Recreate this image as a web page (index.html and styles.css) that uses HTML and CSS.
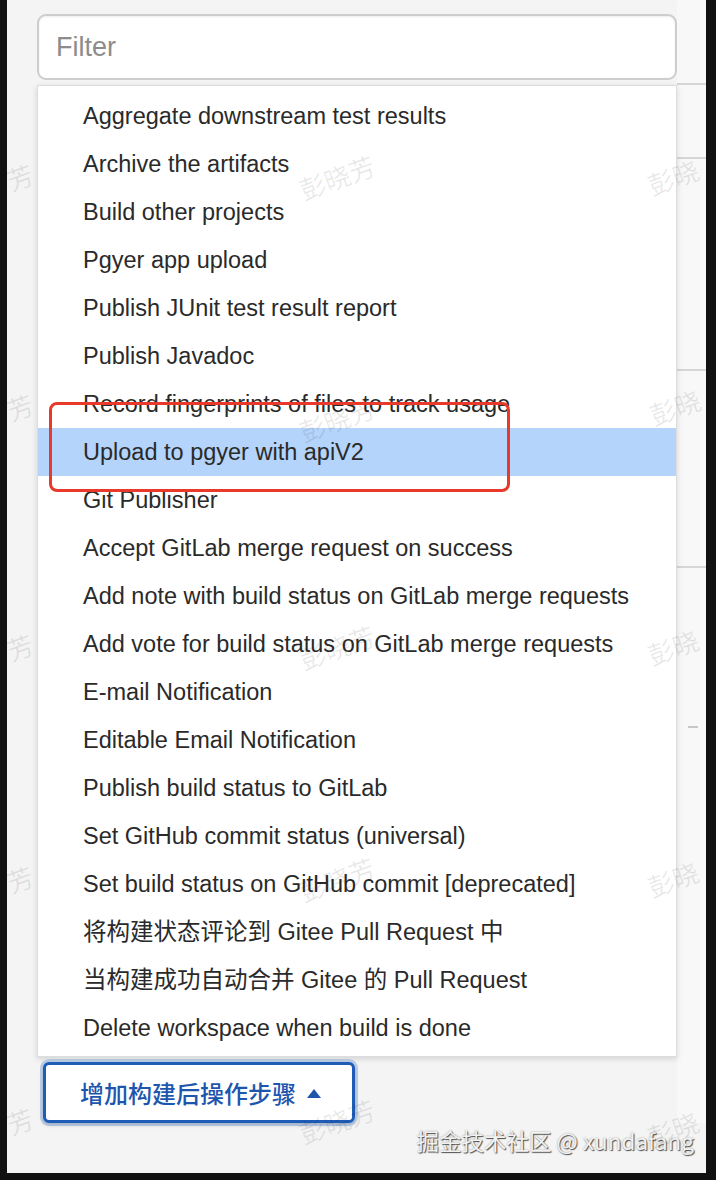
FILE: index.html
```html
<!DOCTYPE html>
<html lang="zh-CN">
<head>
<meta charset="utf-8">
<title>Post-build actions</title>
<link rel="stylesheet" href="styles.css">
</head>
<body>
<div class="page">
  <div class="main">
    <div class="filter"><span class="placeholder">Filter</span></div>
    <ul class="panel">
      <li class="item">Aggregate downstream test results</li>
      <li class="item">Archive the artifacts</li>
      <li class="item">Build other projects</li>
      <li class="item">Pgyer app upload</li>
      <li class="item">Publish JUnit test result report</li>
      <li class="item">Publish Javadoc</li>
      <li class="item">Record fingerprints of files to track usage</li>
      <li class="item active">Upload to pgyer with apiV2</li>
      <li class="item">Git Publisher</li>
      <li class="item">Accept GitLab merge request on success</li>
      <li class="item">Add note with build status on GitLab merge requests</li>
      <li class="item">Add vote for build status on GitLab merge requests</li>
      <li class="item">E-mail Notification</li>
      <li class="item">Editable Email Notification</li>
      <li class="item">Publish build status to GitLab</li>
      <li class="item">Set GitHub commit status (universal)</li>
      <li class="item">Set build status on GitHub commit [deprecated]</li>
      <li class="item">将构建状态评论到 Gitee Pull Request 中</li>
      <li class="item">当构建成功自动合并 Gitee 的 Pull Request</li>
      <li class="item">Delete workspace when build is done</li>
    </ul>
    <button class="add-btn">增加构建后操作步骤<svg class="caret" width="14" height="9" viewBox="0 0 14 9"><path d="M7 0 L14 9 L0 9 Z" fill="currentColor"/></svg></button>
  </div>
  <div class="rail">
    <div class="rail-seg s1"></div>
    <div class="rail-seg s2"></div>
    <div class="rail-seg s3"></div>
    <div class="rail-seg s4"></div>
    <div class="rail-dash"></div>
  </div>
  <div class="footer">掘金技术社区 @ xundafang</div>

  <div class="highlight-box"></div>

  <span class="wm" style="left:0px;top:160px">芳</span>
  <span class="wm" style="left:291px;top:160px">彭晓芳</span>
  <span class="wm" style="left:640px;top:160px">彭晓</span>
  <span class="wm" style="left:0px;top:390px">芳</span>
  <span class="wm" style="left:291px;top:402px">彭晓芳</span>
  <span class="wm" style="left:642px;top:390px">彭晓</span>
  <span class="wm" style="left:0px;top:630px">芳</span>
  <span class="wm" style="left:291px;top:630px">彭晓芳</span>
  <span class="wm" style="left:640px;top:630px">彭晓</span>
  <span class="wm" style="left:0px;top:862px">芳</span>
  <span class="wm" style="left:291px;top:862px">彭晓芳</span>
  <span class="wm" style="left:640px;top:862px">彭晓</span>
  <span class="wm" style="left:0px;top:1104px">芳</span>
  <span class="wm" style="left:291px;top:1104px">彭晓芳</span>
  <span class="wm" style="left:640px;top:1112px">彭晓</span>
</div>
</body>
</html>
```

FILE: styles.css
```css
html, body {
  margin: 0;
  padding: 0;
  background: #111111;
}

body {
  width: 716px;
  height: 1180px;
  overflow: hidden;
  font-family: "Liberation Sans", "Noto Sans CJK SC", Arial, sans-serif;
}

.page {
  position: relative;
  width: 699px;
  height: 1173px;
  margin-left: 7px;
  background: #f4f4f4;
  overflow: hidden;
  display: grid;
  grid-template-columns: 30px 640px 29px;
  grid-template-rows: auto 1fr;
}

.main {
  grid-column: 2;
  grid-row: 1;
  padding-top: 14px;
  display: flex;
  flex-direction: column;
  align-items: flex-start;
  position: relative;
  z-index: 2;
}

.filter {
  box-sizing: border-box;
  width: 640px;
  height: 66px;
  border: 2px solid #cdcdcd;
  border-radius: 9px;
  background: #ffffff;
  box-shadow: inset 0 1px 2px rgba(0, 0, 0, 0.08);
  display: flex;
  align-items: center;
  padding-left: 17px;
}

.placeholder {
  font-size: 27px;
  color: #8c8c8c;
}

.panel {
  box-sizing: border-box;
  list-style: none;
  margin: 5px 0 0 0;
  padding: 6px 0;
  width: 640px;
  height: 972px;
  background: #ffffff;
  border: 1px solid #dddddd;
  box-shadow: 0 2px 6px rgba(0, 0, 0, 0.14);
}

.item {
  height: 48px;
  line-height: 48px;
  padding-left: 45px;
  font-size: 23.5px;
  color: #2a2a2a;
  white-space: nowrap;
}

.item.active {
  background: #b4d4fb;
}

.add-btn {
  box-sizing: border-box;
  margin: 5px 0 0 6px;
  width: 312px;
  height: 61px;
  border: 3px solid #1f5cb8;
  border-radius: 6px;
  background: #ffffff;
  box-shadow: 0 0 0 3px rgba(90, 140, 210, 0.35), 0 2px 4px rgba(0, 0, 0, 0.2);
  color: #1e56ae;
  font-family: "Noto Sans CJK SC", "Liberation Sans", sans-serif;
  font-size: 24px;
  font-weight: 500;
  display: flex;
  align-items: center;
  padding: 0 0 0 34px;
  gap: 11px;
}

.caret {
  display: block;
  margin-top: 1px;
}

.rail {
  grid-column: 3;
  grid-row: 1;
  background: #f8f8f8;
  display: flex;
  flex-direction: column;
  z-index: 1;
}

.rail-seg {
  border-bottom: 2px solid #d6d6d6;
}

.s1 { height: 83px; }
.s2 { height: 72px; }
.s3 { height: 210px; }
.s4 { height: 195px; }

.rail-dash {
  margin: 158px 0 0 11px;
  width: 10px;
  height: 2px;
  background: #c8c8c8;
}

.footer {
  grid-column: 1 / -1;
  grid-row: 2;
  text-align: right;
  padding: 2px 12px 0 0;
  font-family: "Noto Sans CJK SC", "Liberation Sans", sans-serif;
  font-size: 22.5px;
  line-height: 30px;
  color: #f2f2f2;
  text-shadow: 1px 1px 1px rgba(0, 0, 0, 0.65), 0 0 2px rgba(0, 0, 0, 0.35);
  z-index: 3;
}

.highlight-box {
  position: absolute;
  left: 42px;
  top: 402px;
  width: 461px;
  height: 90px;
  box-sizing: border-box;
  border: 3px solid #e8392b;
  border-radius: 8px;
  z-index: 5;
}

.wm {
  position: absolute;
  font-family: "Noto Sans CJK SC", sans-serif;
  font-size: 26px;
  line-height: 34px;
  color: rgba(0, 0, 0, 0.09);
  transform: rotate(-20deg);
  white-space: nowrap;
  z-index: 4;
  pointer-events: none;
}
```
